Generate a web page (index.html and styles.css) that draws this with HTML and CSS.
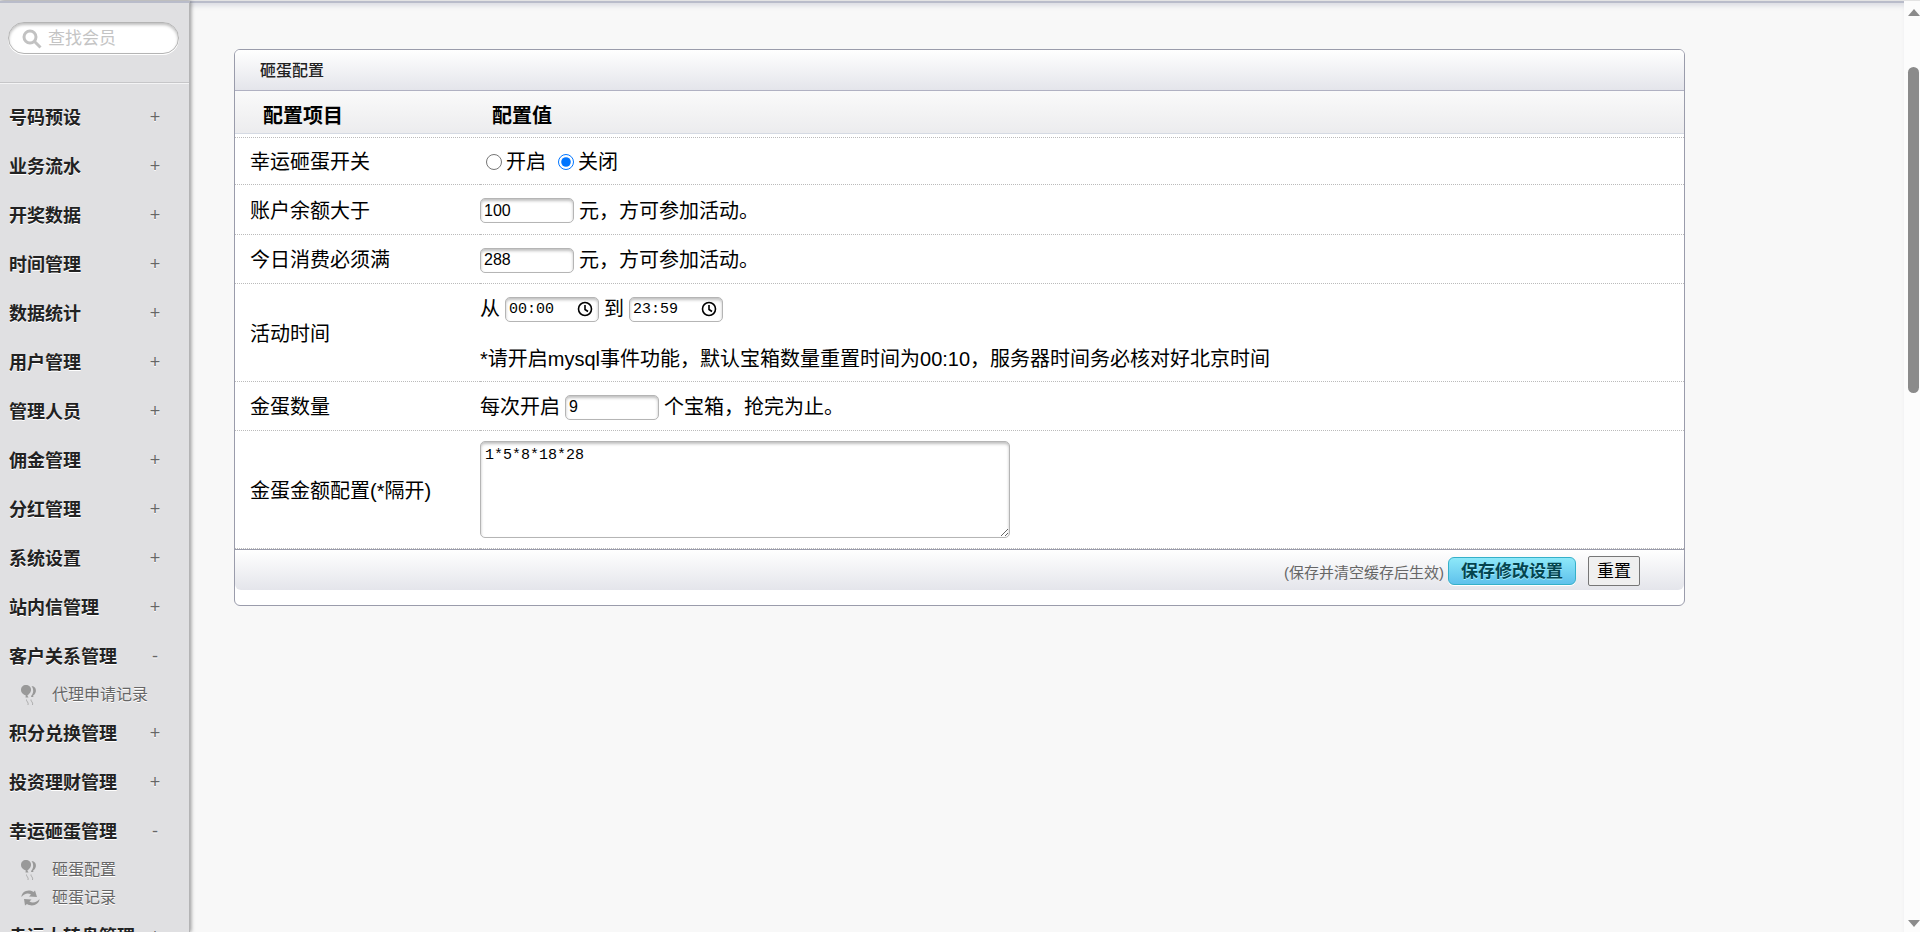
FILE: index.html
```html
<!DOCTYPE html>
<html lang="zh-CN">
<head>
<meta charset="utf-8">
<title>砸蛋配置</title>
<link rel="stylesheet" href="styles.css">
</head>
<body>
<svg class="defs" aria-hidden="true">
  <symbol id="balloons" viewBox="0 0 20 22">
    <path d="M11.500 2c3.200.2 5 2.800 4.300 5.800-.5 2-1.600 3.200-2.800 4l.5 1.200h-2.500l.4-1.500C13.500 9.500 14 5 11.500 2z"/>
    <path d="M6 1c3.500 0 5.500 2.500 5 5.500C10.600 9 8.500 10.500 7.300 11.500L8.500 13.500h-3l.3-2C3.500 10.500 1 9 1 6 1 3 3 1 6 1z"/>
    <path d="M6.500 15.500c-.5 2 2.500 2.500 1.500 5.500M11 15.500c-.5 2 2.500 2.500 1.500 5.500" fill="none" stroke="currentColor" stroke-opacity=".7"/>
  </symbol>
  <symbol id="cycle" viewBox="0 0 20 22">
    <path d="M1.500 10C1.500 5 8 1.500 13.500 5L15 3.500l2 6.500-8-.5L11 7.500C7.500 5.500 4 7 1.500 10z"/>
    <path d="M19.500 12c0 5-7 8.500-12.500 5L5 18.500 4 12l7.500.5L9.500 14.500c3.500 2 7.500.5 10-2.500z"/>
  </symbol>
  <symbol id="clock" viewBox="0 0 16 16">
    <path d="M8 1.500a6.500 6.500 0 1 0 0 13 6.500 6.500 0 0 0 0-13zM8 4v4.500l3 2" fill="none" stroke="#000" stroke-width="1.600"/>
  </symbol>
</svg>
<div class="page">
  <nav class="sidebar">
    <form class="search">
      <label class="search-box">
        <svg class="search-icon" viewBox="0 0 20 20" aria-hidden="true"><circle cx="8" cy="8" r="6"/><path d="M12.500 12.500L18.500 18.500"/></svg>
        <input type="text" placeholder="查找会员" aria-label="查找会员">
      </label>
    </form>
    <div class="menu">
      <a class="group" href="#">号码预设<span>+</span></a>
      <a class="group" href="#">业务流水<span>+</span></a>
      <a class="group" href="#">开奖数据<span>+</span></a>
      <a class="group" href="#">时间管理<span>+</span></a>
      <a class="group" href="#">数据统计<span>+</span></a>
      <a class="group" href="#">用户管理<span>+</span></a>
      <a class="group" href="#">管理人员<span>+</span></a>
      <a class="group" href="#">佣金管理<span>+</span></a>
      <a class="group" href="#">分红管理<span>+</span></a>
      <a class="group" href="#">系统设置<span>+</span></a>
      <a class="group" href="#">站内信管理<span>+</span></a>
      <a class="group" href="#">客户关系管理<span>-</span></a>
      <a class="sub" href="#"><svg aria-hidden="true"><use href="#balloons"/></svg>代理申请记录</a>
      <a class="group" href="#">积分兑换管理<span>+</span></a>
      <a class="group" href="#">投资理财管理<span>+</span></a>
      <a class="group" href="#">幸运砸蛋管理<span>-</span></a>
      <a class="sub" href="#"><svg aria-hidden="true"><use href="#balloons"/></svg>砸蛋配置</a>
      <a class="sub" href="#"><svg aria-hidden="true"><use href="#cycle"/></svg>砸蛋记录</a>
      <a class="group" href="#">幸运大转盘管理<span>+</span></a>
    </div>
  </nav>
  <main class="content">
    <form class="panel">
      <h1 class="panel-title">砸蛋配置</h1>
      <table class="settings">
        <thead>
          <tr><th class="name">配置项目</th><th>配置值</th></tr>
        </thead>
        <tbody>
          <tr class="spacer"><td colspan="2"></td></tr>
          <tr>
            <td>幸运砸蛋开关</td>
            <td><div class="radios"><label><input type="radio" name="switch">开启</label><label><input type="radio" name="switch" checked>关闭</label></div></td>
          </tr>
          <tr class="tall">
            <td><label for="balance">账户余额大于</label></td>
            <td><div class="line"><input class="field" id="balance" type="text" value="100">元，方可参加活动。</div></td>
          </tr>
          <tr>
            <td><label for="spend">今日消费必须满</label></td>
            <td><div class="line"><input class="field" id="spend" type="text" value="288">元，方可参加活动。</div></td>
          </tr>
          <tr>
            <td>活动时间</td>
            <td>
              <div class="line">
                <label for="from">从</label>
                <span class="field time"><input id="from" type="text" value="00:00"><svg aria-hidden="true"><use href="#clock"/></svg></span>
                <label for="to">到</label>
                <span class="field time"><input id="to" type="text" value="23:59"><svg aria-hidden="true"><use href="#clock"/></svg></span>
              </div>
              <div class="line note">*请开启mysql事件功能，默认宝箱数量重置时间为00:10，服务器时间务必核对好北京时间</div>
            </td>
          </tr>
          <tr>
            <td><label for="count">金蛋数量</label></td>
            <td><div class="line">每次开启<input class="field" id="count" type="text" value="9">个宝箱，抢完为止。</div></td>
          </tr>
          <tr>
            <td><label for="amounts">金蛋金额配置(*隔开)</label></td>
            <td class="area-cell"><textarea class="area" id="amounts">1*5*8*18*28</textarea></td>
          </tr>
        </tbody>
      </table>
      <div class="actions">
        <span class="hint">(保存并清空缓存后生效)</span>
        <button class="save" type="submit">保存修改设置</button>
        <button class="reset" type="reset">重置</button>
      </div>
    </form>
  </main>
  <div class="scrollbar" aria-hidden="true">
    <i class="arrow up"></i>
    <i class="thumb"></i>
    <i class="arrow down"></i>
  </div>
</div>
</body>
</html>
```

FILE: styles.css
```css
* { box-sizing: border-box; }
body {
  margin: 0;
  overflow: hidden;
  background: #f8f8f8;
  color: #000;
  font-family: "Liberation Sans", "Noto Sans CJK SC", sans-serif;
  font-size: 20px;
}
.defs { display: none; }
.page {
  display: flex;
  height: 100vh;
  border-top: 1px solid #e3e3e3;
}

/* sidebar */
.sidebar {
  flex: none;
  width: 190px;
  overflow: hidden;
  background: #e0e0e2;
  border-top: 2px solid #b9bcca;
  border-right: 1px solid #b4b4b5;
  box-shadow: 1px 0 4px rgba(0, 0, 0, .4);
  z-index: 1;
}
.search {
  padding: 19px 10px 28px 8px;
  border-bottom: 1px solid #c6c6c8;
  box-shadow: 0 1px 0 #f4f4f5;
}
.search-box {
  display: flex;
  align-items: center;
  gap: 6px;
  height: 32px;
  padding: 2px 13px 0;
  border: 1px solid #b4b4b4;
  border-radius: 16px;
  background: #fff;
  box-shadow: inset 0 2px 3px rgba(0, 0, 0, .25), 0 1px 0 #fff;
}
.search-icon {
  flex: none;
  width: 20px;
  height: 20px;
  fill: none;
  stroke: #c2c2c2;
  stroke-width: 3;
}
.search input {
  width: 100%;
  min-width: 0;
  padding: 0;
  border: 0;
  outline: 0;
  background: none;
  font: inherit;
  font-size: 17px;
  line-height: 24px;
}
.search input::placeholder { color: #c4c4c4; }
.menu { padding-top: 8px; }
.group, .sub {
  display: flex;
  align-items: center;
  text-decoration: none;
  text-shadow: 0 1px 0 #fff;
}
.group {
  justify-content: space-between;
  height: 49px;
  padding: 0 23px 0 9px;
  color: #222;
  font-size: 18px;
  font-weight: bold;
  white-space: nowrap;
}
.group span {
  width: 22px;
  padding-top: 4px;
  text-align: center;
  color: #666;
  font-weight: normal;
}
.sub {
  gap: 12px;
  height: 28px;
  padding-left: 20px;
  color: #666;
  font-size: 16px;
}
.sub svg {
  width: 20px;
  height: 22px;
  margin-top: 4px;
  fill: currentColor;
  color: #999;
}

/* content */
.content {
  flex: 1;
  min-width: 0;
  padding: 46px 219px 0 44px;
  border-top: 2px solid #b9bcca;
  box-shadow: inset 0 5px 5px -2px #dcdde3;
}
.panel {
  border: 1px solid #9a9cab;
  border-radius: 6px;
  padding-bottom: 15px;
  background: #fff;
  overflow: hidden;
}
.panel-title {
  margin: 0;
  padding: 1px 25px 0;
  border-bottom: 1px solid #b0b1c2;
  background: linear-gradient(#fff, #e4e5eb);
  color: #222;
  font-size: 16px;
  font-weight: 500;
  line-height: 39px;
}
.settings {
  width: 100%;
  border-collapse: separate;
  border-spacing: 0;
}
.settings th {
  height: 43px;
  padding: 7px 12px 0;
  border-bottom: 1px solid #d5dae3;
  background: linear-gradient(#fafafa, #ececee);
  line-height: 30px;
  text-align: left;
}
.settings th.name {
  width: 245px;
  padding-left: 28px;
}
.settings td {
  height: 49px;
  padding: 2px 0 0 15px;
  border-bottom: 1px dotted #bbb;
  line-height: 30px;
}
.settings td + td { padding-left: 0; }
.settings .spacer td { height: 4px; padding: 0; }
.settings tr:nth-child(2) td { height: 47px; }
.settings .tall td { height: 50px; }
.line, .radios, .radios label {
  display: flex;
  align-items: center;
}
.line { gap: 5px; height: 46px; }
.line.note { height: 49px; padding-top: 4px; }
.radios { gap: 12px; padding-left: 6px; }
.radios label { gap: 4px; }
.radios input { width: 16px; height: 16px; margin: 0; }
.field, .area {
  border: 1px solid #b5b5b5;
  border-radius: 5px;
  background: #fff;
  box-shadow: inset 0 2px 3px rgba(0, 0, 0, .25);
  color: #000;
}
.field {
  width: 94px;
  height: 25px;
  padding: 0 3px;
  font: 16px "Liberation Sans", sans-serif;
}
.time {
  display: flex;
  align-items: center;
  gap: 4px;
  padding-right: 5px;
}
.time input {
  flex: 1;
  min-width: 0;
  padding: 0;
  border: 0;
  outline: 0;
  background: none;
}
.time svg { width: 16px; height: 16px; }
.time input, .area { font: 15px "Liberation Mono", monospace; }
.settings td.area-cell { padding: 10px 0; }
.area {
  display: block;
  width: 530px;
  height: 97px;
  padding: 5px 4px;
}
.actions {
  display: flex;
  align-items: center;
  justify-content: flex-end;
  height: 41px;
  padding: 2px 44px 0 0;
  border-top: 1px solid #9a9cab;
  border-radius: 0 0 6px 6px;
  background: linear-gradient(#fff, #e4e5eb);
}
.hint { color: #666; font-size: 15px; }
.save, .reset { font: inherit; font-size: 17px; line-height: 24px; }
.save {
  height: 28px;
  margin: 0 12px 0 4px;
  padding: 2px 12px 0;
  border: 1px solid #35b0c9;
  border-radius: 6px;
  background: linear-gradient(#8de8f9, #5fc1ec);
  box-shadow: 0 1px 0 #fff;
  color: #04444f;
  font-weight: bold;
  text-shadow: 0 1px 0 #a5ecfb;
}
.reset {
  height: 30px;
  padding: 2px 8px 0;
  border: 1px solid #767676;
  border-radius: 2px;
  background: #efefef;
  color: #000;
}

/* scrollbar */
.scrollbar {
  display: flex;
  flex: none;
  flex-direction: column;
  align-items: center;
  width: 16px;
  padding: 8px 0 5px 3px;
  background: #fcfcfc;
}
.arrow { border: 6px solid transparent; }
.up { border-top: 0; border-bottom: 7px solid #8b8b8b; }
.down { margin-top: auto; border-bottom: 0; border-top: 7px solid #8b8b8b; }
.thumb {
  width: 11px;
  height: 35vh;
  margin-top: 51px;
  border-radius: 6px;
  background: #8b8b8b;
}
```
